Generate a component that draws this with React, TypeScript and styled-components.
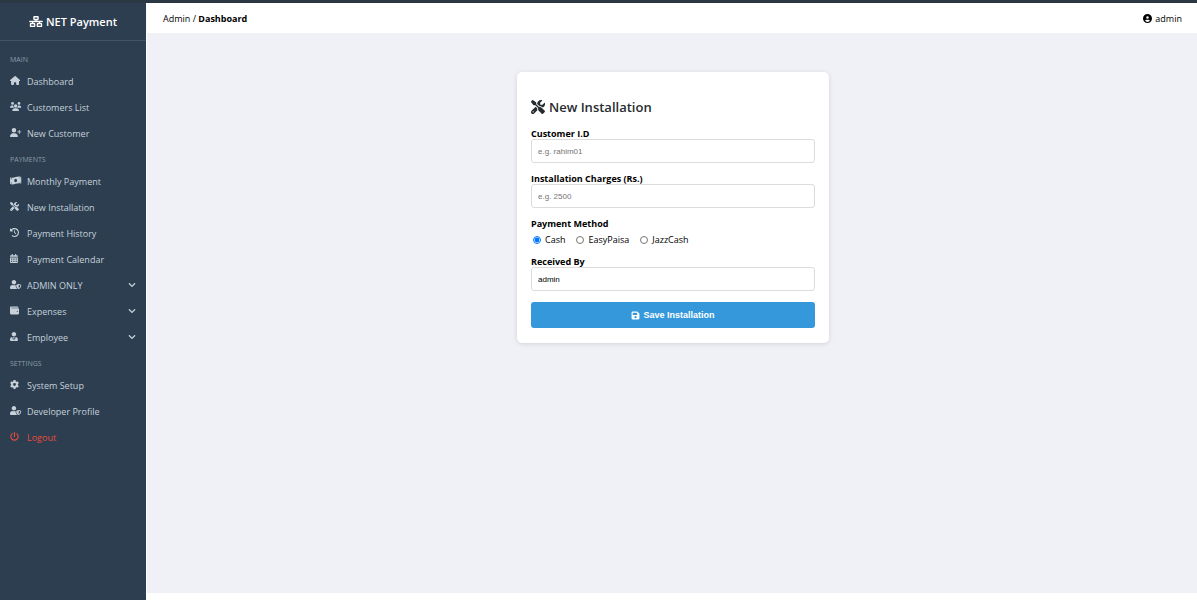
import React from "react";
import styled, { createGlobalStyle } from "styled-components";
import {
  FaCircleUser,
  FaClockRotateLeft,
  FaFloppyDisk,
  FaGear,
  FaHouse,
  FaNetworkWired,
  FaPowerOff,
  FaScrewdriverWrench,
  FaUserPlus,
  FaUsers,
} from "react-icons/fa6";
import {
  FaCalendarAlt,
  FaChevronDown,
  FaMoneyBillWave,
  FaUserShield,
  FaUserTie,
  FaWallet,
} from "react-icons/fa";
import type { IconType } from "react-icons";

const GlobalStyle = createGlobalStyle`
  *, *::before, *::after { box-sizing: border-box; }
  body {
    margin: 0;
    background: #ffffff;
    color: #000000;
    font-family: "Segoe UI", "Open Sans", "Noto Sans", sans-serif;
    font-size: 9px;
  }
`;

const Page = styled.div`
  display: flex;
  min-height: 100vh;
  border-top: 3px solid #2b3844;
`;

const Sidebar = styled.aside`
  flex: 0 0 146px;
  background: #2c3e50;
  color: #c6d1da;
`;

const Brand = styled.div`
  display: flex;
  align-items: center;
  justify-content: center;
  gap: 3px;
  height: 38px;
  border-bottom: 1px solid #3f5468;
  color: #ffffff;
  font-size: 11px;
  font-weight: 600;

  svg {
    width: 14px;
    height: 11px;
  }
`;

const Nav = styled.nav`
  padding-top: 5px;
`;

const NavHeading = styled.h2`
  margin: 0;
  padding: 8px 10px 2px;
  color: #8c9dab;
  font-size: 7px;
  font-weight: 500;
  line-height: 12px;
  text-transform: uppercase;
`;

const NavList = styled.ul`
  margin: 0;
  padding: 0;
  list-style: none;
`;

const NavLink = styled.a<{ $danger?: boolean }>`
  display: flex;
  align-items: center;
  height: 26px;
  padding: 0 10px;
  color: ${({ $danger }) => ($danger ? "#e74c3c" : "inherit")};
  text-decoration: none;
`;

const NavIcon = styled.span`
  display: flex;
  width: 17px;
  padding-bottom: 2px;

  svg {
    width: 12px;
    height: 9px;
  }
`;

const NavArrow = styled(FaChevronDown)`
  width: 8px;
  height: 8px;
  margin-left: auto;
`;

const Main = styled.div`
  display: flex;
  flex: 1;
  flex-direction: column;
  margin-left: 1px;
  padding-bottom: 7px;
`;

const TopBar = styled.header`
  display: flex;
  align-items: center;
  justify-content: space-between;
  height: 30px;
  padding: 0 15px 0 16px;
  background: #ffffff;
  box-shadow: 0 1px 2px rgba(0, 0, 0, 0.08);
`;

const UserLabel = styled.div`
  display: flex;
  align-items: center;
  gap: 3px;
`;

const Content = styled.main`
  flex: 1;
  padding: 39px 20px 39px 22px;
  background: #eff1f6;
`;

const Card = styled.form`
  max-width: 312px;
  margin: 0 auto;
  padding: 26px 14px 15px;
  border-radius: 5px;
  background: #ffffff;
  box-shadow: 0 1px 5px rgba(0, 0, 0, 0.12);
`;

const CardTitle = styled.h1`
  display: flex;
  align-items: center;
  gap: 4px;
  margin: 0 0 10px;
  color: #262b30;
  font-size: 13px;
  font-weight: 600;
  line-height: 18px;

  svg {
    width: 14px;
    height: 14px;
  }
`;

const Field = styled.div`
  margin-bottom: 8px;
`;

const FieldLabel = styled.label`
  display: block;
  padding-top: 3px;
  font-weight: 700;
  line-height: 10px;
`;

const TextInput = styled.input`
  display: block;
  width: 100%;
  height: 24px;
  padding: 0 6px;
  border: 1px solid #dcdcdc;
  border-radius: 3px;
  background: #ffffff;
  color: #000000;
  font-family: "Liberation Sans", Arial, sans-serif;
  font-size: 8px;

  &::placeholder {
    color: #757575;
  }
`;

const RadioGroup = styled.fieldset`
  margin: 0 0 7px;
  padding: 0;
  border: 0;
`;

const RadioLegend = styled.legend`
  padding: 3px 0 0;
  font-weight: 700;
  line-height: 10px;
`;

const RadioRow = styled.div`
  display: flex;
  gap: 11px;
  padding: 4px 2px 0;
`;

const RadioLabel = styled.label`
  display: flex;
  align-items: center;
  gap: 4px;
  line-height: 14px;

  input {
    width: 8px;
    height: 8px;
    margin: 0;
  }
`;

const SaveButton = styled.button`
  display: flex;
  align-items: center;
  justify-content: center;
  gap: 3px;
  width: 100%;
  height: 26px;
  margin-top: 11px;
  border: 0;
  border-radius: 3px;
  background: #3498db;
  color: #ffffff;
  font-family: "Liberation Sans", Arial, sans-serif;
  font-size: 9px;
  font-weight: 700;
`;

type NavItem = {
  label: string;
  icon: IconType;
  expandable?: boolean;
  danger?: boolean;
};

const sections: { title: string; items: NavItem[] }[] = [
  {
    title: "Main",
    items: [
      { label: "Dashboard", icon: FaHouse },
      { label: "Customers List", icon: FaUsers },
      { label: "New Customer", icon: FaUserPlus },
    ],
  },
  {
    title: "Payments",
    items: [
      { label: "Monthly Payment", icon: FaMoneyBillWave },
      { label: "New Installation", icon: FaScrewdriverWrench },
      { label: "Payment History", icon: FaClockRotateLeft },
      { label: "Payment Calendar", icon: FaCalendarAlt },
      { label: "ADMIN ONLY", icon: FaUserShield, expandable: true },
      { label: "Expenses", icon: FaWallet, expandable: true },
      { label: "Employee", icon: FaUserTie, expandable: true },
    ],
  },
  {
    title: "Settings",
    items: [
      { label: "System Setup", icon: FaGear },
      { label: "Developer Profile", icon: FaUserShield },
      { label: "Logout", icon: FaPowerOff, danger: true },
    ],
  },
];

const methods = ["Cash", "EasyPaisa", "JazzCash"];

export default function App() {
  return (
    <>
      <GlobalStyle />
      <Page>
        <Sidebar>
          <Brand>
            <FaNetworkWired />
            NET Payment
          </Brand>
          <Nav>
            {sections.map((section) => (
              <React.Fragment key={section.title}>
                <NavHeading>{section.title}</NavHeading>
                <NavList>
                  {section.items.map(({ label, icon: Icon, expandable, danger }) => (
                    <li key={label}>
                      <NavLink href="#" $danger={danger}>
                        <NavIcon>
                          <Icon preserveAspectRatio="xMinYMid meet" />
                        </NavIcon>
                        {label}
                        {expandable && <NavArrow />}
                      </NavLink>
                    </li>
                  ))}
                </NavList>
              </React.Fragment>
            ))}
          </Nav>
        </Sidebar>
        <Main>
          <TopBar>
            <div>
              Admin / <strong>Dashboard</strong>
            </div>
            <UserLabel>
              <FaCircleUser />
              admin
            </UserLabel>
          </TopBar>
          <Content>
            <Card onSubmit={(event) => event.preventDefault()}>
              <CardTitle>
                <FaScrewdriverWrench />
                New Installation
              </CardTitle>
              <Field>
                <FieldLabel htmlFor="customer">Customer I.D</FieldLabel>
                <TextInput id="customer" placeholder="e.g. rahim01" />
              </Field>
              <Field>
                <FieldLabel htmlFor="charges">Installation Charges (Rs.)</FieldLabel>
                <TextInput id="charges" placeholder="e.g. 2500" />
              </Field>
              <RadioGroup>
                <RadioLegend>Payment Method</RadioLegend>
                <RadioRow>
                  {methods.map((method, index) => (
                    <RadioLabel key={method}>
                      <input type="radio" name="method" value={method} defaultChecked={index === 0} />
                      {method}
                    </RadioLabel>
                  ))}
                </RadioRow>
              </RadioGroup>
              <FieldLabel htmlFor="receiver">Received By</FieldLabel>
              <TextInput id="receiver" defaultValue="admin" />
              <SaveButton type="submit">
                <FaFloppyDisk />
                Save Installation
              </SaveButton>
            </Card>
          </Content>
        </Main>
      </Page>
    </>
  );
}
